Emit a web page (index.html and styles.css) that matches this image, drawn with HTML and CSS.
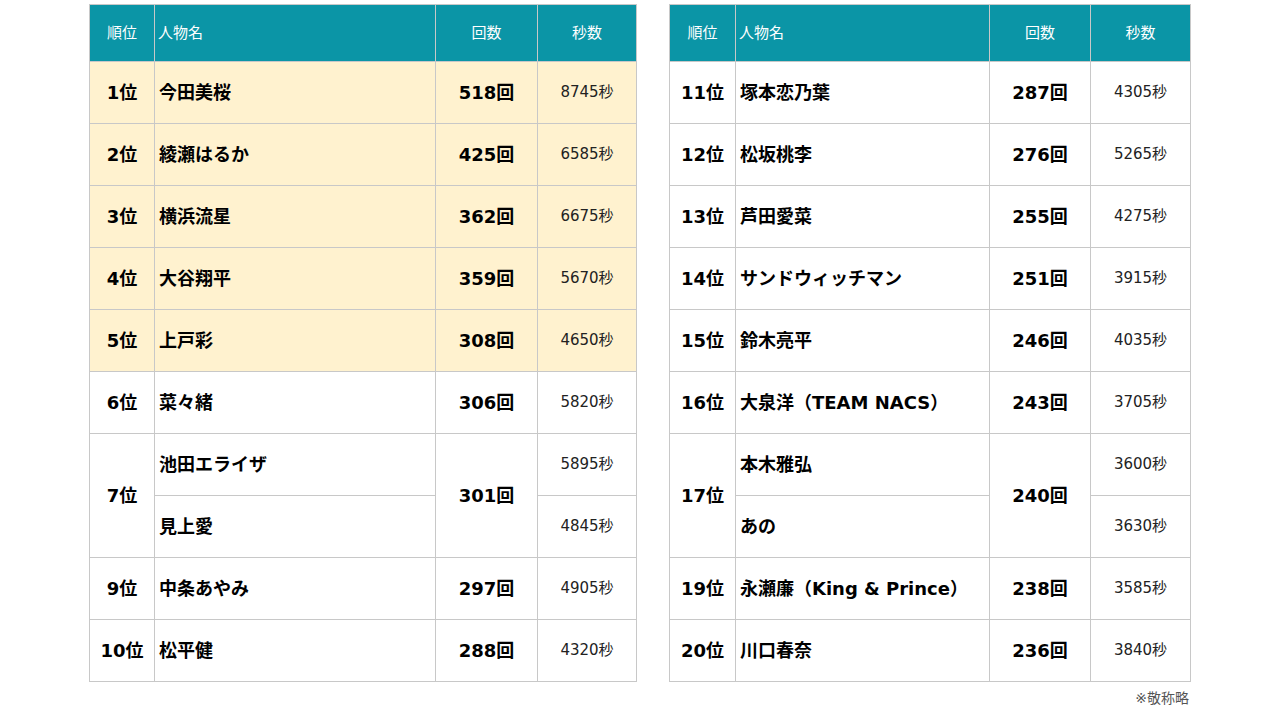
FILE: index.html
```html
<!DOCTYPE html>
<html lang="ja">
  <head>
    <meta charset="UTF-8" />
    <meta name="viewport" content="width=device-width, initial-scale=1.0" />
    <title>出演回数ランキング</title>
    <link rel="stylesheet" href="styles.css">
  </head>

  <body>
    <div class="ranking">
      <div class="tables">
        <!-- 1位〜10位 -->
        <table class="rank-table rank-left">
          <colgroup>
            <col class="col-rank" />
            <col class="col-name-l" />
            <col class="col-count" />
            <col class="col-sec" />
          </colgroup>
          <thead>
            <tr>
              <th>順位</th>
              <th class="th-name">人物名</th>
              <th>回数</th>
              <th>秒数</th>
            </tr>
          </thead>
          <tbody>
            <tr class="top">
              <td class="rank">1位</td>
              <td class="name">今田美桜</td>
              <td class="count">518回</td>
              <td class="sec">8745秒</td>
            </tr>
            <tr class="top">
              <td class="rank">2位</td>
              <td class="name">綾瀬はるか</td>
              <td class="count">425回</td>
              <td class="sec">6585秒</td>
            </tr>
            <tr class="top">
              <td class="rank">3位</td>
              <td class="name">横浜流星</td>
              <td class="count">362回</td>
              <td class="sec">6675秒</td>
            </tr>
            <tr class="top">
              <td class="rank">4位</td>
              <td class="name">大谷翔平</td>
              <td class="count">359回</td>
              <td class="sec">5670秒</td>
            </tr>
            <tr class="top">
              <td class="rank">5位</td>
              <td class="name">上戸彩</td>
              <td class="count">308回</td>
              <td class="sec">4650秒</td>
            </tr>
            <tr>
              <td class="rank">6位</td>
              <td class="name">菜々緒</td>
              <td class="count">306回</td>
              <td class="sec">5820秒</td>
            </tr>
            <tr>
              <td class="rank" rowspan="2">7位</td>
              <td class="name">池田エライザ</td>
              <td class="count" rowspan="2">301回</td>
              <td class="sec">5895秒</td>
            </tr>
            <tr>
              <td class="name">見上愛</td>
              <td class="sec">4845秒</td>
            </tr>
            <tr>
              <td class="rank">9位</td>
              <td class="name">中条あやみ</td>
              <td class="count">297回</td>
              <td class="sec">4905秒</td>
            </tr>
            <tr>
              <td class="rank">10位</td>
              <td class="name">松平健</td>
              <td class="count">288回</td>
              <td class="sec">4320秒</td>
            </tr>
          </tbody>
        </table>

        <!-- 11位〜20位 -->
        <table class="rank-table rank-right">
          <colgroup>
            <col class="col-rank" />
            <col class="col-name-r" />
            <col class="col-count" />
            <col class="col-sec" />
          </colgroup>
          <thead>
            <tr>
              <th>順位</th>
              <th class="th-name">人物名</th>
              <th>回数</th>
              <th>秒数</th>
            </tr>
          </thead>
          <tbody>
            <tr>
              <td class="rank">11位</td>
              <td class="name">塚本恋乃葉</td>
              <td class="count">287回</td>
              <td class="sec">4305秒</td>
            </tr>
            <tr>
              <td class="rank">12位</td>
              <td class="name">松坂桃李</td>
              <td class="count">276回</td>
              <td class="sec">5265秒</td>
            </tr>
            <tr>
              <td class="rank">13位</td>
              <td class="name">芦田愛菜</td>
              <td class="count">255回</td>
              <td class="sec">4275秒</td>
            </tr>
            <tr>
              <td class="rank">14位</td>
              <td class="name">サンドウィッチマン</td>
              <td class="count">251回</td>
              <td class="sec">3915秒</td>
            </tr>
            <tr>
              <td class="rank">15位</td>
              <td class="name">鈴木亮平</td>
              <td class="count">246回</td>
              <td class="sec">4035秒</td>
            </tr>
            <tr>
              <td class="rank">16位</td>
              <td class="name">大泉洋（TEAM NACS）</td>
              <td class="count">243回</td>
              <td class="sec">3705秒</td>
            </tr>
            <tr>
              <td class="rank" rowspan="2">17位</td>
              <td class="name">本木雅弘</td>
              <td class="count" rowspan="2">240回</td>
              <td class="sec">3600秒</td>
            </tr>
            <tr>
              <td class="name">あの</td>
              <td class="sec">3630秒</td>
            </tr>
            <tr>
              <td class="rank">19位</td>
              <td class="name">永瀬廉（King &amp; Prince）</td>
              <td class="count">238回</td>
              <td class="sec">3585秒</td>
            </tr>
            <tr>
              <td class="rank">20位</td>
              <td class="name">川口春奈</td>
              <td class="count">236回</td>
              <td class="sec">3840秒</td>
            </tr>
          </tbody>
        </table>
      </div>
      <p class="note">※敬称略</p>
    </div>
  </body>
</html>
```

FILE: styles.css
```css
body {
  margin: 0;
  background: #fff;
  color: #000;
  font-family: "DejaVu Sans", "Noto Sans CJK JP", sans-serif;
}

.ranking {
  width: 1102px;
  margin: 0 auto;
  padding-top: 4px;
}

.tables {
  display: flex;
  justify-content: space-between;
  align-items: flex-start;
}

.rank-table {
  border-collapse: collapse;
  table-layout: fixed;
}

.rank-left {
  width: 547px;
}

.rank-right {
  width: 521px;
}

.col-rank {
  width: 65px;
}

.rank-right .col-rank {
  width: 66px;
}

.col-name-l {
  width: 281px;
}

.col-name-r {
  width: 254px;
}

.col-count {
  width: 102px;
}

.rank-right .col-count {
  width: 101px;
}

.col-sec {
  width: 99px;
}

.rank-right .col-sec {
  width: 100px;
}

.rank-table th,
.rank-table td {
  border: 1px solid #c8c8c8;
  padding: 0 5px 4px;
}

.rank-table th {
  height: 52px;
  background-color: #0b95a6;
  color: #fff;
  font-size: 15px;
  font-weight: normal;
  text-align: center;
}

.rank-table th.th-name {
  text-align: left;
  padding-left: 3px;
}

.rank-table td {
  height: 57px;
  font-size: 18px;
  font-weight: 700;
}

.rank-table td.name {
  padding-left: 4px;
}

.rank-table tr.top td {
  background-color: #fff2cf;
}

.rank-table td.rank {
  text-align: center;
  padding-left: 0;
  padding-right: 0;
}

.count {
  text-align: center;
}

.rank-table td.sec {
  text-align: center;
  font-size: 15px;
  font-weight: normal;
  color: #222;
}

.note {
  margin: 5px 2px 0 0;
  text-align: right;
  font-size: 14px;
  color: #555;
}
```
